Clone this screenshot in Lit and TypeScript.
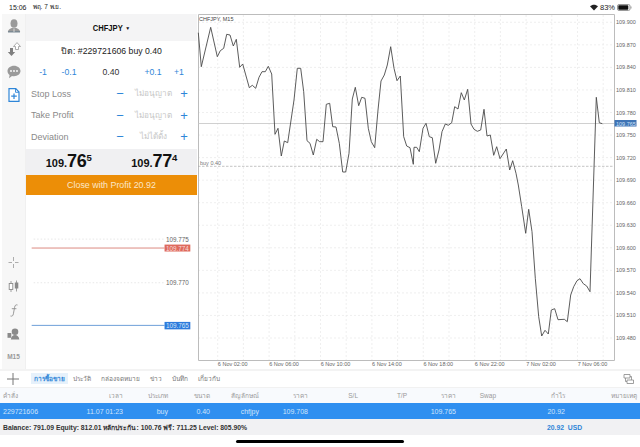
import { LitElement, html, css, svg } from "lit";
import { customElement } from "lit/decorators.js";

const z6 = [[10,98],[19,200],[47,82],[67,170],[76,152],[86,145],[95,103],[105,105],[115,138],[124,118],[134,202],[143,192],[163,263],[172,256],[182,265],[192,232],[201,215],[211,215],[220,199],[230,222],[240,403],[249,385],[259,468],[268,423],[278,428],[297,300],[307,205],[317,205],[326,275],[336,422],[345,430],[355,465],[365,418],[374,425],[384,425],[394,313],[404,310],[413,380],[423,381],[433,430],[443,516],[452,516],[462,460],[472,297],[481,262],[491,317],[500,292],[510,295],[520,385],[529,425],[539,443],[549,330],[558,243],[568,225],[577,195],[587,140],[597,205],[606,242],[616,228],[626,410],[635,438],[645,443],[655,493]];
const z7 = [[-3,442],[5,442],[13,455],[24,385],[33,370],[43,410],[52,413],[62,490],[72,450],[81,395],[91,372],[100,376],[110,368],[119,320],[129,327],[139,278],[148,300],[158,268],[168,372],[177,388],[187,394],[197,390],[207,328],[216,408],[226,405],[236,466],[245,440],[255,476],[274,447],[284,510],[293,482],[303,520]];
const z9 = [[310,0],[320,65],[332,145],[341,73],[351,140],[361,280],[371,395],[380,453],[390,436],[400,447],[409,375],[419,371],[429,404],[448,403],[457,410],[467,330],[476,305],[486,287],[495,281],[505,296],[515,303],[525,320]];
const z7b = [[544,292],[553,368],[562,371]];
const pts = [
  ...z6.map(([x, y]) => [195 + x / 3, y / 3]),
  ...z7.map(([x, y]) => [415 + x / 3, y / 3]),
  ...z9.map(([x, y]) => [415 + x / 3, 185 + y / 3]),
  ...z7b.map(([x, y]) => [415 + x / 3, y / 3]),
].map(([x, y]) => `${x.toFixed(1)},${y.toFixed(1)}`).join(" ");

const prices = ["109.900","109.870","109.840","109.810","109.780","109.750","109.720","109.690","109.660","109.630","109.600","109.570","109.540","109.510","109.480"];
const times = ["6 Nov 02:00","6 Nov 06:00","6 Nov 10:00","6 Nov 14:00","6 Nov 18:00","6 Nov 22:00","7 Nov 02:00","7 Nov 06:00"];
const cols = [
  ["คำสั่ง","229721606"],["เวลา","11.07 01:23"],["ประเภท","buy"],["ขนาด","0.40"],["สัญลักษณ์","chfjpy"],["ราคา","109.708"],
  ["S/L",""],["T/P",""],["ราคา","109.765"],["Swap",""],["กำไร","20.92"],["หมายเหตุ",""],
];

@customElement("app-root")
export class AppRoot extends LitElement {
  static styles = css`
    :host { display: flex; flex-direction: column; width: 640px; height: 447px; background: #fff; overflow: hidden;
      font-family: "Liberation Sans", "Noto Sans", "Noto Sans CJK SC", sans-serif; color: #222; }
    .status { height: 14px; flex: none; display: flex; align-items: center; padding: 0 8px 0 9px; font-size: 7px; color: #222; background: #fff; }
    .status .date { margin-left: 6px; font-size: 6.5px; }
    .status .right { margin-left: auto; display: flex; align-items: center; gap: 2px; }
    .status .pct { font-size: 7.500px; }
    .main { height: 355px; flex: none; display: flex; }
    .side { width: 26px; flex: none; background: #f7f7f7; display: flex; flex-direction: column; align-items: center; border-left: 2px solid #fff; border-right: 1px solid #f0f0f0; box-sizing: border-box; }
    .side svg { display: block; }
    .side .top { display: flex; flex-direction: column; align-items: center; gap: 9px; padding-top: 5px; }
    .side .bot { margin-top: auto; display: flex; flex-direction: column; align-items: center; gap: 11px; padding-bottom: 8px; }
    .m15 { font-size: 6.5px; line-height: 8px; font-weight: 700; color: #9a9a9a; margin-top: 2px; }
    .panel { width: 171px; flex: none; display: flex; flex-direction: column; background: #fff; }
    .phead { height: 27px; flex: none; background: #f4f4f5; display: flex; align-items: center; justify-content: center; font-size: 9.5px; font-weight: 700; color: #111; gap: 3px; }
    .phead span { display: inline-block; transform: scaleX(.8); margin: 0 -4px; }
    .phead i { font-style: normal; font-size: 5px; }
    .ttl { height: 21px; flex: none; display: flex; align-items: center; justify-content: center; font-size: 8.7px; color: #222; margin-top: -1px; }
    .qty { height: 22px; flex: none; display: grid; grid-template-columns: 26px 26px 58px 26px 26px; align-items: center; font-size: 8.7px; color: #2f86d8; text-align: center; padding-left: 4px; }
    .qty b { font-weight: 400; color: #333; }
    .opt { height: 21.5px; flex: none; display: grid; grid-template-columns: 84px 10px 1fr 14px; align-items: center; padding: 0 6px 0 5px; font-size: 9px; color: #8a8a8a; }
    .opt .na { text-align: center; color: #c6c6c6; font-size: 8.2px; padding-left: 4px; }
    .opt .pm { color: #2f86d8; font-size: 13px; line-height: 1; text-align: center; }
    .quotes { height: 26px; flex: none; margin-top: 1px; background: #f0f0f2; display: grid; grid-template-columns: 1fr 1fr; align-items: center; text-align: center; font-size: 11px; font-weight: 700; color: #111; }
    .quotes b { font-size: 18px; letter-spacing: -.3px; }
    .quotes sup { font-size: 9.5px; line-height: 0; vertical-align: 6px; font-weight: 700; }
    .close { height: 20px; flex: none; background: #ec8e07; color: #fbe6c7; font-size: 8.9px; display: flex; align-items: center; justify-content: center; }
    .mini { flex: 1; min-height: 0; display: block; width: 100%; }
    .chart { flex: 1; min-width: 0; display: block; }
    text { font-family: "Liberation Sans", sans-serif; }
    .tabs { height: 18px; flex: none; display: flex; align-items: center; background: #fff; font-size: 6.5px; color: #777; border-top: 2px solid #f3f3f3; box-sizing: border-box; padding-bottom: 1px; }
    .tabs .plus { width: 31px; flex: none; display: flex; justify-content: center; padding-right: 6px; box-sizing: border-box; }
    .tab { padding: 0 5px; height: 11px; line-height: 11px; }
    .tab.on { background: #e6f1fb; color: #2f86d8; font-weight: 700; padding: 0 3px; }
    .tabs svg.lay { margin-left: auto; margin-right: 6px; }
    .tbl { display: grid; grid-template-columns: 123px 45px 42px 49px 49px 50px 49px 49px 40px 69px 72px; }
    .hd { height: 16px; flex: none; background: #f8fafd; border-top: 1px solid #f1f1f1; box-sizing: border-box; color: #999; font-size: 6.5px; }
    .rw { height: 16px; flex: none; background: #2f8ff0; color: #cfe4fb; font-size: 7px; }
    .tbl > span { display: flex; align-items: center; justify-content: flex-end; white-space: nowrap; min-width: 0; }
    .tbl > span.first { justify-content: space-between; padding-left: 3px; }
    .bal { height: 16px; flex: none; background: #f1f1f3; display: flex; align-items: center; justify-content: space-between; padding-left: 3px; font-size: 6.8px; font-weight: 700; color: #333; }
    .bal span:last-child { width: 93px; color: #2f86d8; flex: none; }
    .home { flex: 1; display: flex; justify-content: center; align-items: center; padding-top: 1px; }
    .home div { width: 168px; height: 3px; background: #000; border-radius: 2px; }
  `;

  icon(kind: string) {
    const g = "#9a9a9a";
    switch (kind) {
      case "person": return html`<svg width="14" height="14" viewBox="0 0 14 14"><ellipse cx="7" cy="4.500" rx="3.500" ry="4.300" fill="${g}"/><path d="M.8 13c.3-2.600 2.700-4.200 6.200-4.200s5.900 1.600 6.200 4.200z" fill="${g}"/><rect x="1" y="12" width="12" height="1.500" fill="#7d8a93"/><path d="M7 9.500v3.500" stroke="#f7f7f7" stroke-width=".7"/></svg>`;
      case "updown": return html`<svg width="14" height="14" viewBox="0 0 14 14"><path d="M3 6v4H.8l3.700 4L8.200 10H6V6z" fill="#7f7f7f"/><path d="M8.500 7.500V4.500H6.500L10 .6l3.500 3.900h-2v3z" fill="#fff" stroke="#999" stroke-width=".8"/></svg>`;
      case "chat": return html`<svg width="14" height="14" viewBox="0 0 14 14"><path d="M7 .8c3.600 0 6.500 2.300 6.500 5.200S10.600 11.200 7 11.200c-.7 0-1.400-.1-2-.2l-3 2.300.6-3.200C1.300 9.200.5 7.700.5 6 .5 3.100 3.400.8 7 .8z" fill="#9a9a9a"/><circle cx="4" cy="6" r=".9" fill="#fff"/><circle cx="7" cy="6" r=".9" fill="#fff"/><circle cx="10" cy="6" r=".9" fill="#fff"/></svg>`;
      case "doc": return html`<svg width="12" height="14" viewBox="0 0 12 14"><path d="M1 .7h6.800L11 4v9.300H1z" fill="#fff" stroke="#2f86d8" stroke-width="1.200"/><path d="M7.500.8v3.500H11" fill="none" stroke="#2f86d8" stroke-width=".9"/><path d="M6 5.500v5.500M3.200 8.200h5.600" stroke="#2f86d8" stroke-width="1.200"/></svg>`;
      case "cross": return html`<svg width="13" height="13" viewBox="0 0 13 13"><path d="M6.500 1v4M6.500 8v4M1.500 6.500h3.500M8 6.500h3.500" stroke="#adadad" stroke-width="1"/></svg>`;
      case "candle": return html`<svg width="12" height="13" viewBox="0 0 12 13"><path d="M3 1v11M8.500 .5v11" stroke="#8a8a8a" stroke-width=".8"/><rect x="1.200" y="3.500" width="3.600" height="6" fill="#fff" stroke="#8a8a8a" stroke-width=".9"/><rect x="6.800" y="2.500" width="3.500" height="6" fill="#8a8a8a"/></svg>`;
      case "f": return html`<svg width="10" height="13" viewBox="0 0 10 13"><path d="M8.500 1C6.700.4 6 1.400 5.600 3.300L4.400 9.800C4 11.800 3.200 12.500 1.500 12M2.800 4.700h4.600" fill="none" stroke="#8f8f8f" stroke-width=".9"/></svg>`;
      default: return html`<svg width="13" height="12" viewBox="0 0 13 12"><circle cx="8" cy="3.800" r="3.300" fill="#8a8a8a"/><path d="M3.800 11.500c.4-3 1.800-4.500 4.200-4.500s3.900 1.500 4.300 4.500z" fill="#8a8a8a"/><rect x="0.500" y="5" width="3.800" height="4.800" fill="#8a8a8a"/></svg>`;
    }
  }

  chart() {
    const xs = Array.from({ length: 16 }, (_, i) => 217.7 + 25.7 * i);
    const ys = prices.map((_, i) => 22.3 + 22.55 * i);
    return html`<svg class="chart" viewBox="197 14 443 355" width="443" height="355">
      <rect x="197" y="14" width="443" height="355" fill="#fff"/>
      ${xs.map((x) => svg`<line x1=${x} x2=${x} y1="15" y2="360" stroke="#e8e8e8" stroke-width=".7" stroke-dasharray="2 2"/>`)}
      ${ys.map((y) => svg`<line x1="198" x2="614" y1=${y} y2=${y} stroke="#e8e8e8" stroke-width=".7" stroke-dasharray="2 2"/>`)}
      <path d="M198.500 14.500H614.500V360.500H198.500Z" fill="none" stroke="#bcbcbc" stroke-width="1"/>
      <line x1="198" x2="614" y1="123.500" y2="123.500" stroke="#c4c4c4" stroke-width=".8"/>
      <line x1="198" x2="614" y1="166.300" y2="166.300" stroke="#aaa" stroke-width=".7" stroke-dasharray="2.500 1.500"/>
      <polyline points=${pts} fill="none" stroke="#4a4a4a" stroke-width=".9" stroke-linejoin="round"/>
      <text x="199" y="20.500" font-size="5.500" fill="#444">CHFJPY, M15</text>
      <text x="200" y="165" font-size="5.500" fill="#777">buy 0.40</text>
      ${prices.map((p, i) => svg`<text x="616" y=${ys[i] + 2} font-size="5.500" fill="#666">${p}</text>`)}
      <rect x="614.500" y="120" width="22" height="6.500" fill="#3f74b5"/>
      <text x="616" y="125.500" font-size="5.500" fill="#cfe0f5">109.765</text>
      ${times.map((t, i) => svg`<text x=${232.7 + 51.4 * i} y="366" font-size="5.500" fill="#666" text-anchor="middle">${t}</text>`)}
    </svg>`;
  }

  mini() {
    return html`<svg class="mini" viewBox="26 193 171 176" width="171" height="176">
      <line x1="33" x2="165" y1="237.500" y2="237.500" stroke="#dcdcdc" stroke-width=".7" stroke-dasharray="1.500 2"/>
      <line x1="33" x2="165" y1="281.500" y2="281.500" stroke="#dcdcdc" stroke-width=".7" stroke-dasharray="1.500 2"/>
      <line x1="31" x2="165" y1="246.500" y2="246.500" stroke="#dc8a80" stroke-width="1"/>
      <line x1="31" x2="165" y1="324.500" y2="324.500" stroke="#6d9fd8" stroke-width="1"/>
      <text x="189.500" y="240" font-size="6.400" fill="#666" text-anchor="end">109.775</text>
      <text x="189.500" y="284" font-size="6.400" fill="#666" text-anchor="end">109.770</text>
      <rect x="165" y="243" width="26" height="7" fill="#de6a5e"/>
      <text x="189.500" y="249" font-size="6.400" fill="#f9dcd8" text-anchor="end">109.774</text>
      <rect x="165" y="321" width="26" height="7.500" fill="#2d7bdc"/>
      <text x="189.500" y="327" font-size="6.400" fill="#d5e6fa" text-anchor="end">109.765</text>
    </svg>`;
  }

  render() {
    const opts = [["Stop Loss", "ไม่อนุญาต"], ["Take Profit", "ไม่อนุญาต"], ["Deviation", "ไม่ได้ตั้ง"]];
    return html`
      <div class="status">
        <span>15:06</span><span class="date">พฤ. 7 พ.ย.</span>
        <span class="right">
          <svg width="8" height="7" viewBox="0 0 9 7"><path d="M4.500 6.800 0 2.200C2.500-.3 6.500-.3 9 2.200z" fill="#222"/></svg>
          <span class="pct">83%</span>
          <svg width="15" height="7" viewBox="0 0 15 7"><rect x=".5" y=".5" width="12.500" height="6" rx="1.500" fill="#fff" stroke="#999"/><rect x="1.300" y="1.300" width="10" height="4.400" rx=".8" fill="#111"/><rect x="13.500" y="2.500" width="1" height="2" fill="#999"/></svg>
        </span>
      </div>
      <div class="main">
        <div class="side">
          <div class="top">${this.icon("person")}${this.icon("updown")}${this.icon("chat")}${this.icon("doc")}</div>
          <div class="bot">${this.icon("cross")}${this.icon("candle")}${this.icon("f")}${this.icon("people")}<span class="m15">M15</span></div>
        </div>
        <div class="panel">
          <div class="phead"><span>CHFJPY</span> <i>▼</i></div>
          <div class="ttl">ปิด: #229721606 buy 0.40</div>
          <div class="qty"><span>-1</span><span>-0.1</span><b>0.40</b><span>+0.1</span><span>+1</span></div>
          ${opts.map(([a, b]) => html`<div class="opt"><span>${a}</span><span class="pm">−</span><span class="na">${b}</span><span class="pm">+</span></div>`)}
          <div class="quotes">
            <span>109.<b>76</b><sup>5</sup></span>
            <span>109.<b>77</b><sup>4</sup></span>
          </div>
          <div class="close">Close with Profit 20.92</div>
          ${this.mini()}
        </div>
        ${this.chart()}
      </div>
      <div class="tabs">
        <span class="plus"><svg width="12" height="12" viewBox="0 0 12 12"><path d="M6 0v12M0 6h12" stroke="#777" stroke-width="1"/></svg></span>
        <span class="tab on">การซื้อขาย</span><span class="tab">ประวัติ</span><span class="tab">กล่องจดหมาย</span><span class="tab">ข่าว</span><span class="tab">บันทึก</span><span class="tab">เกี่ยวกับ</span>
        <svg class="lay" width="11" height="10" viewBox="0 0 11 10"><path d="M1 .5h6v3.500H1zM4 6h6.500v3.500H4zM2.500 4v3.500H4M8.500 6V2.500H7" fill="none" stroke="#888" stroke-width=".8"/></svg>
      </div>
      <div class="tbl hd">${this.cells(0)}</div>
      <div class="tbl rw">${this.cells(1)}</div>
      <div class="bal"><span>Balance: 791.09 Equity: 812.01 หลักประกัน: 100.76 ฟรี: 711.25 Level: 805.90%</span><span>20.92&nbsp; USD</span></div>
      <div class="home"><div></div></div>
    `;
  }

  cells(k: number) {
    return html`<span class="first"><span>${cols[0][k]}</span><span>${cols[1][k]}</span></span>${cols.slice(2).map((r) => html`<span>${r[k]}</span>`)}`;
  }
}
